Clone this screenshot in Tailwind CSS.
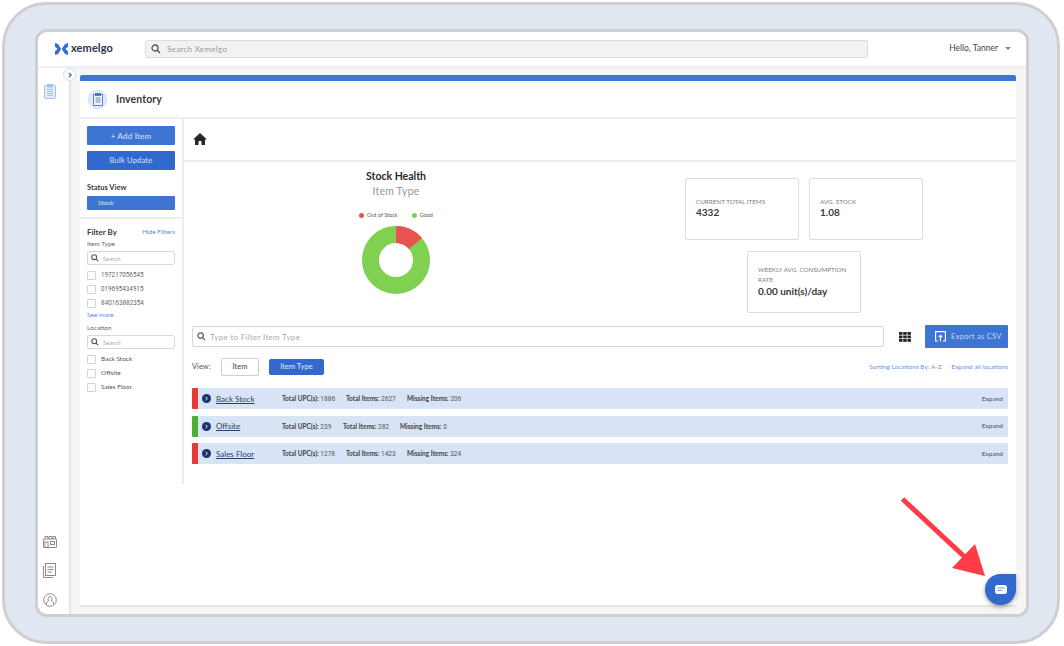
<!DOCTYPE html>
<html lang="en">
<head>
  <meta charset="UTF-8">
  <title>Xemelgo Inventory</title>
  <script src="https://cdn.jsdelivr.net/npm/@tailwindcss/browser@4"></script>
</head>
<body class="bg-white font-['Lato',sans-serif] lining-nums text-[#3a3a3a] overflow-hidden">
  <div class="relative w-[1064px] h-[646px] p-[2px]">
    <!-- outer frame -->
    <div class="w-[1058px] h-[642px] rounded-[44px] border-[3px] border-[#cfcfcf] bg-[#e1e7f0] pl-[30px] pt-[24px]">
      <!-- app window -->
      <div class="w-[994px] h-[588px] rounded-[12px] border-[3px] border-[#cfcfcf] bg-white overflow-hidden flex flex-col">
        <!-- top bar -->
        <header class="h-[36px] shrink-0 border-b-2 border-[#eeeeee] flex items-center pl-[17px] pr-[15px] pb-[1px]">
          <div class="w-[90px] flex items-center gap-[3px]">
            <svg width="13" height="12" viewBox="0 0 13 12"><path d="M0 0 L3 1 L6.2 6 L3 11 L0 12 L0 8.2 L2.6 6 L0 3.8 Z" fill="#2f6fd8"/><path d="M13 0 L10 1 L6.8 6 L10 11 L13 12 L13 8.2 L10.4 6 L13 3.8 Z" fill="#2f6fd8"/></svg>
            <span class="text-[11px] font-bold text-[#2a3350] tracking-[0.1px]">xemelgo</span>
          </div>
          <div class="w-[723px] h-[18px] rounded-[2px] border border-[#dddddd] bg-[#f2f2f2] flex items-center pl-[5px] gap-[6px]">
            <svg width="10" height="10" viewBox="0 0 10 10" fill="none" stroke="#555" stroke-width="1.3"><circle cx="4" cy="4" r="3"/><path d="M6.3 6.3 L9 9"/></svg>
            <span class="text-[8px] text-[#9a9a9a] tracking-[0.3px]">Search Xemelgo</span>
          </div>
          <div class="ml-auto flex items-center gap-[7px]">
            <span class="text-[8.5px] text-[#444]">Hello, Tanner</span>
            <span class="w-0 h-0 border-x-[3px] border-x-transparent border-t-[3px] border-t-[#888]"></span>
          </div>
        </header>

        <div class="flex-1 flex min-h-0">
          <!-- icon rail -->
          <aside class="relative w-[33px] shrink-0 border-r-2 border-[#e6e6e6] flex flex-col items-center pt-[16px] pb-[7px] pr-[8px]">
            <svg width="12" height="15" viewBox="0 0 12 15" fill="#e4ecfa" stroke="#a5c1ef" stroke-width="1"><rect x="0.5" y="1.5" width="11" height="13" rx="1"/><rect x="3.5" y="0.5" width="5" height="2.5" fill="#a5c1ef"/><path d="M3 5.5 H9 M3 7.5 H9 M3 9.5 H9 M3 11.5 H9" fill="none"/></svg>
            <div class="mt-auto flex flex-col items-center gap-[15px]">
              <svg width="14" height="13" viewBox="0 0 14 13" fill="none" stroke="#808080" stroke-width="0.9"><rect x="0.5" y="4" width="13" height="8.5" rx="0.5"/><path d="M2 4 V1.5 H5 V4 M6 4 V1.5 H9 V4 M10 4 V1.5 H12.5 V4"/><rect x="2" y="7" width="3" height="5.5"/><rect x="7.5" y="6.5" width="4" height="3"/></svg>
              <svg width="13" height="15" viewBox="0 0 13 15" fill="none" stroke="#808080" stroke-width="0.9"><rect x="2.5" y="0.5" width="10" height="12"/><path d="M0.5 3 V14.5 H10 M4.5 4 H10.5 M4.5 6.5 H10.5 M4.5 9 H9"/></svg>
              <svg width="14" height="14" viewBox="0 0 14 14" fill="none" stroke="#808080" stroke-width="0.9"><circle cx="7" cy="7" r="6.3"/><path d="M3.5 11.5 V9.5 L5.5 8 C4.5 5 5.5 3.5 7 3.5 C8.5 3.5 9.5 5 8.5 8 L10.5 9.5 V11.5"/></svg>
            </div>
            <div class="absolute right-[-7px] top-[0px] w-[13px] h-[13px] rounded-full bg-white border border-[#dddddd] flex items-center justify-center">
              <svg width="6" height="6" viewBox="0 0 6 6" fill="none" stroke="#2f6fd8" stroke-width="1.4"><path d="M2 1 L4 3 L2 5"/></svg>
            </div>
          </aside>

          <!-- content area -->
          <main class="flex-1 min-w-0 bg-[#f5f5f5] pl-[9px] pr-[10px] pt-[7px] pb-[6px]">
            <div class="h-[532px] bg-white border-b-2 border-[#e8e8e8] flex flex-col">
              <div class="h-[6px] shrink-0 bg-[#3e75d3] rounded-t-[2px]"></div>
              <div class="h-[38px] shrink-0 border-b-2 border-[#efefef] flex items-center pl-[8px] gap-[9px]">
                <div class="w-[19px] h-[19px] rounded-full bg-[#e3ecfa] border border-[#c9daf5] flex items-center justify-center">
                  <svg width="11" height="13" viewBox="0 0 11 13" fill="#f4f7fd" stroke="#4a78c4" stroke-width="0.9"><rect x="1.5" y="1.5" width="9" height="11"/><rect x="3.5" y="0.5" width="5" height="2" fill="#4a78c4"/><path d="M3.5 5 H8.5 M3.5 7 H8.5 M3.5 9 H8.5" fill="none"/></svg>
                </div>
                <span class="text-[10.5px] font-bold text-[#3a3a3a] tracking-[0.1px] pt-[1px]">Inventory</span>
              </div>

              <div class="flex-1 flex min-h-0">
                <!-- filter column -->
                <section class="w-[104px] h-[365px] shrink-0 border-r-2 border-[#ececec]">
                  <div class="px-[7px] pt-[7px] h-[100px] border-b-2 border-[#ececec]">
                    <button class="w-[88px] h-[19px] rounded-[1px] bg-[#3e75d3] text-white/80 text-[8px] tracking-[0.2px] block">+ Add Item</button>
                    <button class="w-[88px] h-[19px] mt-[6px] rounded-[1px] bg-[#3269cf] text-white/80 text-[7.5px] tracking-[0.2px] block">Bulk Update</button>
                    <p class="mt-[13px] text-[7.5px] font-bold text-[#3a3a3a] leading-[10px]">Status View</p>
                    <div class="mt-[3px] w-[88px] h-[14px] rounded-[1px] bg-[#3e75d3] text-white/80 text-[6.5px] flex items-center pl-[11px]">Stock</div>
                  </div>
                  <div class="px-[7px] pt-[7px]">
                    <div class="flex items-center justify-between h-[12px]">
                      <span class="text-[8px] font-bold text-[#3a3a3a]">Filter By</span>
                      <span class="text-[6.5px] text-[#5b8bdc]">Hide Filters</span>
                    </div>
                    <p class="text-[6.5px] text-[#666] leading-[9px] mt-[1px]">Item Type</p>
                    <div class="mt-[3px] w-[88px] h-[14px] border border-[#d8d8d8] rounded-[2px] flex items-center pl-[3px] gap-[4px]">
                      <svg width="8" height="8" viewBox="0 0 10 10" fill="none" stroke="#555" stroke-width="1.4"><circle cx="4" cy="4" r="3"/><path d="M6.3 6.3 L9 9"/></svg>
                      <span class="text-[6px] text-[#aaa]">Search</span>
                    </div>
                    <ul class="mt-[3px] flex flex-col text-[6.3px] text-[#666] font-['Roboto',sans-serif]">
                      <li class="h-[14px] flex items-center gap-[5px]"><span class="w-[9px] h-[9px] rounded-[1px] border border-[#d4d4d4]"></span><span class="pt-[2px]">197217056545</span></li>
                      <li class="h-[14px] flex items-center gap-[5px]"><span class="w-[9px] h-[9px] rounded-[1px] border border-[#d4d4d4]"></span><span class="pt-[2px]">019695434915</span></li>
                      <li class="h-[14px] flex items-center gap-[5px]"><span class="w-[9px] h-[9px] rounded-[1px] border border-[#d4d4d4]"></span><span class="pt-[2px]">840163882354</span></li>
                    </ul>
                    <p class="text-[6.5px] text-[#5b8bdc] leading-[9px]">See more</p>
                    <p class="text-[6.5px] text-[#666] leading-[9px] mt-[4px]">Location</p>
                    <div class="mt-[3px] w-[88px] h-[14px] border border-[#d8d8d8] rounded-[2px] flex items-center pl-[3px] gap-[4px]">
                      <svg width="8" height="8" viewBox="0 0 10 10" fill="none" stroke="#555" stroke-width="1.4"><circle cx="4" cy="4" r="3"/><path d="M6.3 6.3 L9 9"/></svg>
                      <span class="text-[6px] text-[#aaa]">Search</span>
                    </div>
                    <ul class="mt-[3px] flex flex-col text-[6.5px] text-[#555]">
                      <li class="h-[14px] flex items-center gap-[5px]"><span class="w-[9px] h-[9px] rounded-[1px] border border-[#d4d4d4]"></span>Back Stock</li>
                      <li class="h-[14px] flex items-center gap-[5px]"><span class="w-[9px] h-[9px] rounded-[1px] border border-[#d4d4d4]"></span>Offsite</li>
                      <li class="h-[14px] flex items-center gap-[5px]"><span class="w-[9px] h-[9px] rounded-[1px] border border-[#d4d4d4]"></span>Sales Floor</li>
                    </ul>
                  </div>
                </section>

                <!-- results column -->
                <section class="flex-1 min-w-0">
                  <div class="h-[43px] border-b-2 border-[#ececec] flex items-center pl-[9px] pb-[2px]">
                    <svg width="14" height="12" viewBox="0 0 14 12" fill="#262626"><path d="M7 0 L14 6.5 H12 V12 H8.5 V8 H5.5 V12 H2 V6.5 H0 Z"/></svg>
                  </div>

                  <div class="h-[163px] flex">
                    <div class="w-[424px] shrink-0 flex flex-col items-center pt-[8px]">
                      <p class="text-[10.5px] font-bold text-[#2a2a2a] leading-[12px]">Stock Health</p>
                      <p class="text-[10.5px] text-[#999] leading-[12px] mt-[3px] tracking-[0.2px]">Item Type</p>
                      <div class="mt-[14px] flex items-center text-[5.5px] text-[#555] h-[8px]">
                        <span class="w-[5px] h-[5px] rounded-full bg-[#e8534f] mr-[3px]"></span>Out of Stock
                        <span class="w-[5px] h-[5px] rounded-full bg-[#80d052] ml-[14px] mr-[3px]"></span>Good
                      </div>
                      <svg class="mt-[7px]" width="68" height="68" viewBox="0 0 68 68">
                        <g transform="rotate(-90 34 34)" fill="none" stroke-width="17">
                          <circle cx="34" cy="34" r="25.5" stroke="#80d052"/>
                          <circle cx="34" cy="34" r="25.5" stroke="#e8534f" stroke-dasharray="22 138.2"/>
                        </g>
                      </svg>
                    </div>
                    <div class="pl-[77px] pt-[16px] w-[315px] shrink-0">
                      <div class="flex gap-[10px]">
                        <div class="w-[114px] h-[62px] rounded-[2px] border border-[#dddddd] px-[10px] pt-[18px]">
                          <p class="text-[6.3px] text-[#808080] leading-[9px]">CURRENT TOTAL ITEMS</p>
                          <p class="text-[10px] font-bold text-[#3a3a3a] leading-[13px]">4332</p>
                        </div>
                        <div class="w-[114px] h-[62px] rounded-[2px] border border-[#dddddd] px-[10px] pt-[18px]">
                          <p class="text-[6.3px] text-[#808080] leading-[9px]">AVG. STOCK</p>
                          <p class="text-[10px] font-bold text-[#3a3a3a] leading-[13px]">1.08</p>
                        </div>
                      </div>
                      <div class="ml-[62px] mt-[11px] w-[114px] h-[62px] rounded-[2px] border border-[#dddddd] px-[10px] pt-[13px]">
                        <p class="text-[6.3px] text-[#808080] leading-[10px]">WEEKLY AVG. CONSUMPTION RATE</p>
                        <p class="text-[10px] font-bold text-[#3a3a3a] leading-[13px]">0.00 unit(s)/day</p>
                      </div>
                    </div>
                  </div>

                  <div class="px-[8px]">
                    <div class="flex items-center">
                      <div class="w-[692px] h-[21px] border border-[#d8d8d8] rounded-[2px] flex items-center pl-[4px] gap-[4px]">
                        <svg width="9" height="9" viewBox="0 0 10 10" fill="none" stroke="#555" stroke-width="1.3"><circle cx="4" cy="4" r="3"/><path d="M6.3 6.3 L9 9"/></svg>
                        <span class="text-[8px] text-[#aaa] tracking-[0.3px]">Type to Filter Item Type</span>
                      </div>
                      <svg class="ml-[15px]" width="12" height="10" viewBox="0 0 12 10" fill="#222"><rect width="3.5" height="2.8"/><rect x="4.2" width="3.5" height="2.8"/><rect x="8.4" width="3.5" height="2.8"/><rect y="3.5" width="3.5" height="2.8"/><rect x="4.2" y="3.5" width="3.5" height="2.8"/><rect x="8.4" y="3.5" width="3.5" height="2.8"/><rect y="7" width="3.5" height="2.8"/><rect x="4.2" y="7" width="3.5" height="2.8"/><rect x="8.4" y="7" width="3.5" height="2.8"/></svg>
                      <button class="ml-[14px] w-[83px] h-[23px] rounded-[1px] bg-[#3e75d3] text-white/70 text-[7.5px] tracking-[0.3px] flex items-center pl-[10px] gap-[5px]">
                        <svg width="11" height="11" viewBox="0 0 11 11" fill="none" stroke="#fff" stroke-width="1.1"><path d="M3 10 H0.6 V0.6 H10.4 V10 H8"/><path d="M5.5 10.5 V4.5 M3.7 6.2 L5.5 4.3 L7.3 6.2"/></svg>
                        Export as CSV
                      </button>
                    </div>

                    <div class="mt-[10px] h-[18px] flex items-center">
                      <span class="w-[29px] text-[7.5px] text-[#555]">View:</span>
                      <button class="w-[38px] h-[18px] rounded-[2px] border border-[#d0d0d0] text-[7.5px] text-[#444]">Item</button>
                      <button class="ml-[10px] w-[55px] h-[16px] rounded-[2px] bg-[#3269cf] text-white/85 text-[7.5px]">Item Type</button>
                      <span class="ml-auto text-[6.5px] text-[#6b94dd]">Sorting Locations By: A-Z</span>
                      <span class="ml-[10px] text-[6.5px] text-[#6b94dd]">Expand all locations</span>
                    </div>

                    <ul class="mt-[12px] flex flex-col gap-[6.5px]">
                      <li class="h-[21px] bg-[#d8e3f5] flex items-center text-[6.5px] text-[#555]">
                        <span class="w-[6px] h-full bg-[#e53935] rounded-l-[1px]"></span>
                        <span class="ml-[4px] w-[9px] h-[9px] rounded-full bg-[#16356e] flex items-center justify-center"><svg width="5" height="5" viewBox="0 0 6 6" fill="none" stroke="#fff" stroke-width="1.2"><path d="M2 1 L4 3 L2 5"/></svg></span>
                        <span class="ml-[5px] w-[66px] text-[8px] text-[#29406f] underline">Back Stock</span>
                        <span class="w-[64px] pt-[2px]"><b class="text-[#444]">Total UPC(s):</b> <span class="font-['Roboto',sans-serif]">1886</span></span>
                        <span class="w-[61px] pt-[2px]"><b class="text-[#444]">Total Items:</b> <span class="font-['Roboto',sans-serif]">2627</span></span>
                        <span class="pt-[2px]"><b class="text-[#444]">Missing Items:</b> <span class="font-['Roboto',sans-serif]">206</span></span>
                        <span class="ml-auto mr-[5px] text-[#3c4f78]">Expand</span>
                      </li>
                      <li class="h-[21px] bg-[#d8e3f5] flex items-center text-[6.5px] text-[#555]">
                        <span class="w-[6px] h-full bg-[#4caf33] rounded-l-[1px]"></span>
                        <span class="ml-[4px] w-[9px] h-[9px] rounded-full bg-[#16356e] flex items-center justify-center"><svg width="5" height="5" viewBox="0 0 6 6" fill="none" stroke="#fff" stroke-width="1.2"><path d="M2 1 L4 3 L2 5"/></svg></span>
                        <span class="ml-[5px] w-[66px] text-[8px] text-[#29406f] underline">Offsite</span>
                        <span class="w-[61px] pt-[2px]"><b class="text-[#444]">Total UPC(s):</b> <span class="font-['Roboto',sans-serif]">239</span></span>
                        <span class="w-[57px] pt-[2px]"><b class="text-[#444]">Total Items:</b> <span class="font-['Roboto',sans-serif]">282</span></span>
                        <span class="pt-[2px]"><b class="text-[#444]">Missing Items:</b> <span class="font-['Roboto',sans-serif]">0</span></span>
                        <span class="ml-auto mr-[5px] text-[#3c4f78]">Expand</span>
                      </li>
                      <li class="h-[21px] bg-[#d8e3f5] flex items-center text-[6.5px] text-[#555]">
                        <span class="w-[6px] h-full bg-[#e53935] rounded-l-[1px]"></span>
                        <span class="ml-[4px] w-[9px] h-[9px] rounded-full bg-[#16356e] flex items-center justify-center"><svg width="5" height="5" viewBox="0 0 6 6" fill="none" stroke="#fff" stroke-width="1.2"><path d="M2 1 L4 3 L2 5"/></svg></span>
                        <span class="ml-[5px] w-[66px] text-[8px] text-[#29406f] underline">Sales Floor</span>
                        <span class="w-[64px] pt-[2px]"><b class="text-[#444]">Total UPC(s):</b> <span class="font-['Roboto',sans-serif]">1278</span></span>
                        <span class="w-[61px] pt-[2px]"><b class="text-[#444]">Total Items:</b> <span class="font-['Roboto',sans-serif]">1423</span></span>
                        <span class="pt-[2px]"><b class="text-[#444]">Missing Items:</b> <span class="font-['Roboto',sans-serif]">324</span></span>
                        <span class="ml-auto mr-[5px] text-[#3c4f78]">Expand</span>
                      </li>
                    </ul>
                  </div>
                </section>
              </div>
            </div>
          </main>
        </div>
      </div>
    </div>

    <!-- chat bubble -->
    <div class="absolute left-[985px] top-[574px] w-[31px] h-[31px] rounded-full rounded-tr-[4px] bg-[#3269cf] shadow-[0_2px_4px_rgba(0,0,0,0.35)] flex items-center justify-center">
      <svg width="12" height="9" viewBox="0 0 12 9"><rect width="12" height="9" rx="2.5" fill="#fff"/><path d="M2.5 3 H9.5 M2.5 5.5 H7" stroke="#6d96e0" stroke-width="1.2"/></svg>
    </div>
    <!-- annotation arrow -->
    <svg class="absolute left-0 top-0 pointer-events-none" width="1064" height="646" viewBox="0 0 1064 646">
      <path d="M902.5 499 L968 560" stroke="#ff3b47" stroke-width="5" fill="none"/>
      <path d="M975 544 L952 568 L985 576 Z" fill="#ff3b47"/>
    </svg>
  </div>
</body>
</html>
